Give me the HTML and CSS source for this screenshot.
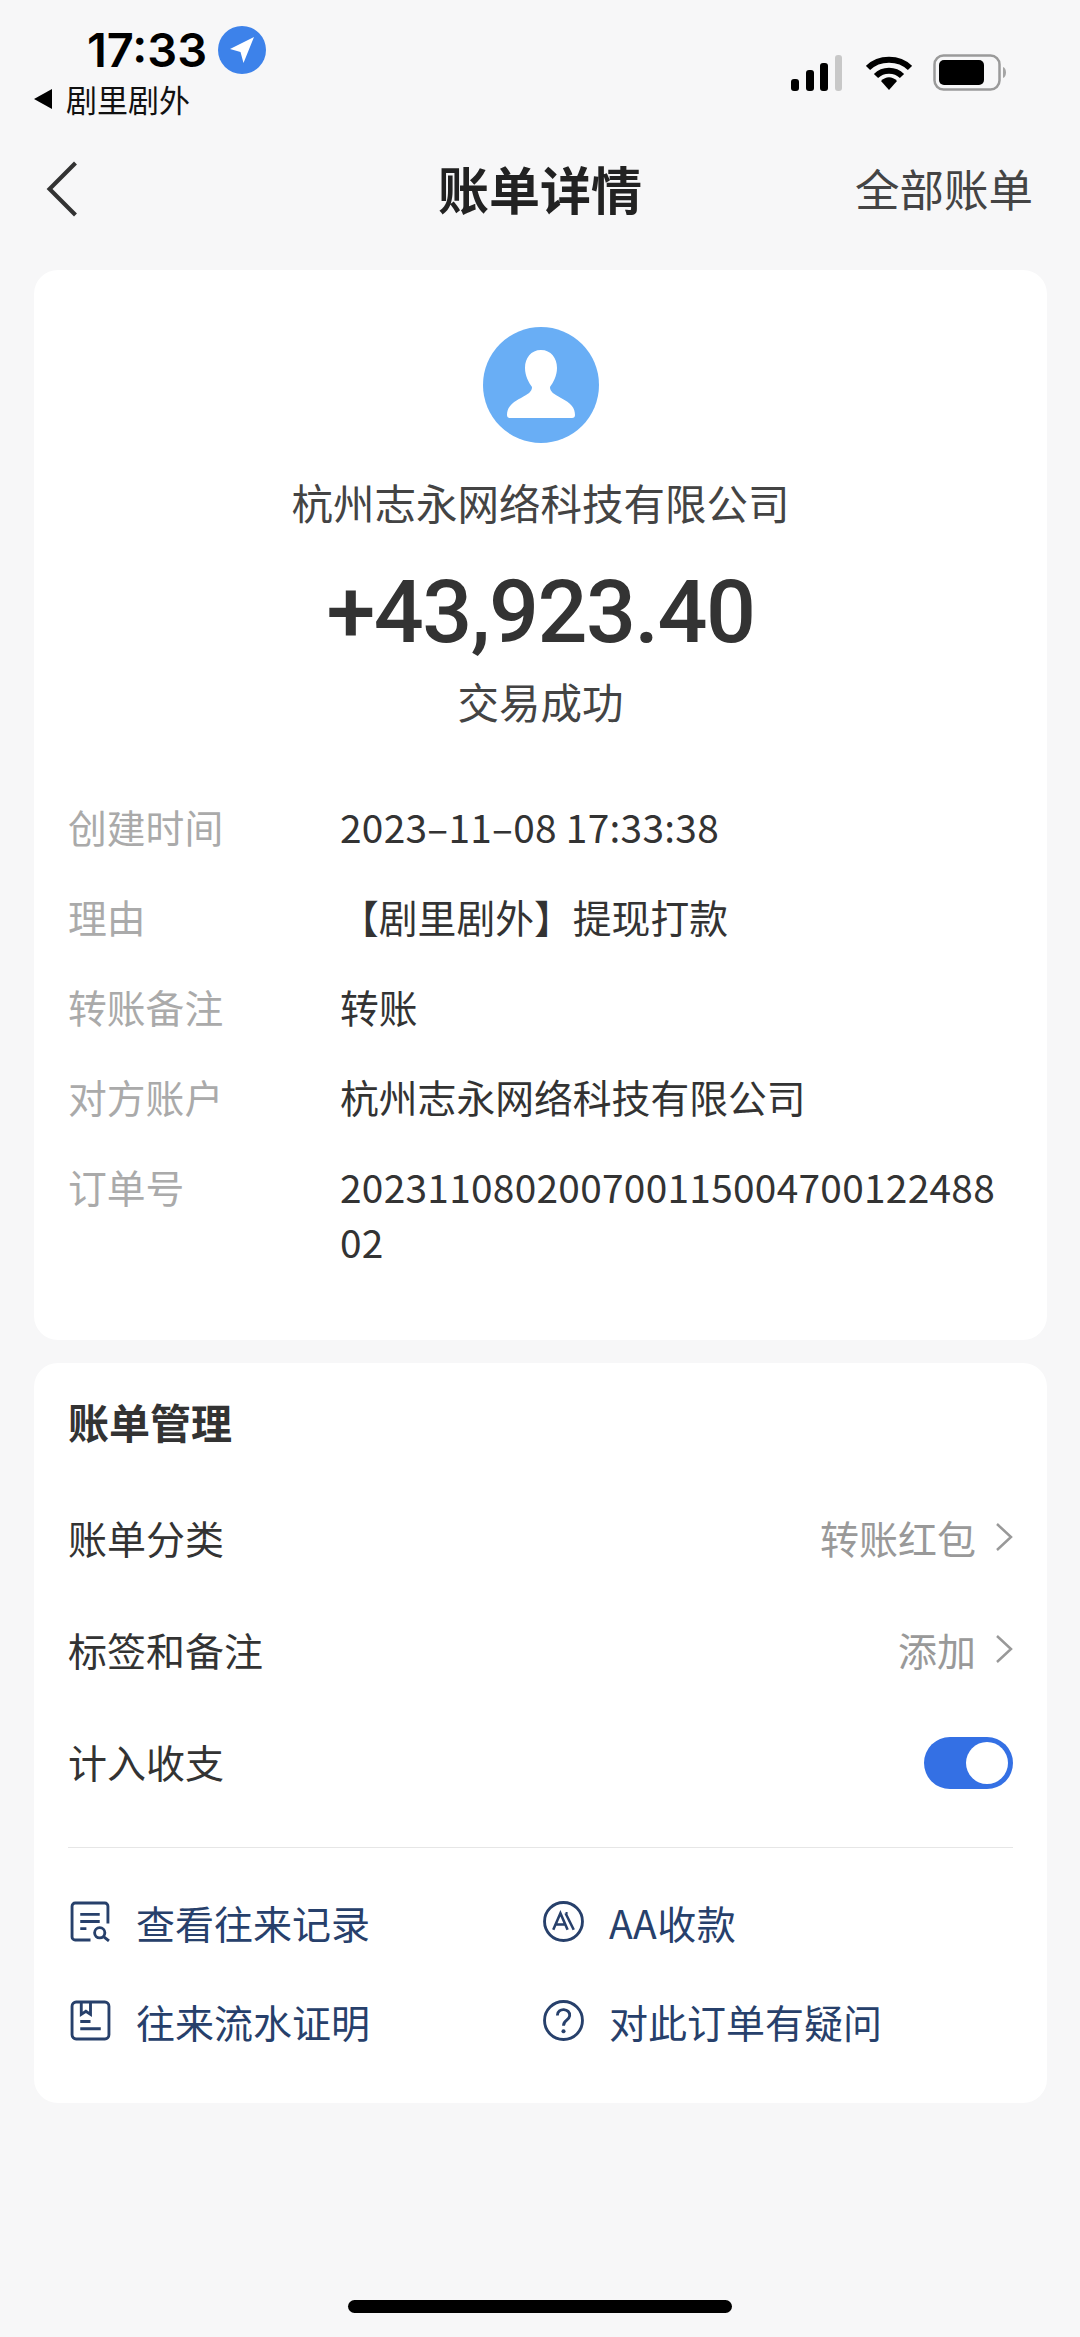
FILE: index.html
```html
<!DOCTYPE html>
<html lang="zh-CN">
<head>
<meta charset="utf-8">
<title>账单详情</title>
<link rel="stylesheet" href="styles.css">
</head>
<body>
<div class="page">
  <header class="status">
    <div class="status-left">
      <div class="clock-row">
        <span class="clock">17:33</span>
        <svg class="loc" viewBox="0 0 48 48"><circle cx="24" cy="24" r="24" fill="#3d82ea"/><path d="M36 11 L12 23 L22.500 26 L25.500 37 Z" fill="#fff"/></svg>
      </div>
      <div class="back-app"><span class="tri"></span><span>剧里剧外</span></div>
    </div>
    <div class="status-right">
      <svg class="signal" viewBox="0 0 54 36"><rect x="0" y="24" width="8" height="12" rx="3" fill="#000"/><rect x="15" y="15" width="8" height="21" rx="3" fill="#000"/><rect x="29" y="8" width="8" height="28" rx="3" fill="#000"/><rect x="44" y="0" width="7" height="36" rx="3" fill="#c8c8c8"/></svg>
      <svg class="wifi" viewBox="0 0 46 34"><path d="M2 12 C13 1 33 1 44 12" fill="none" stroke="#000" stroke-width="6"/><path d="M10 20 C17 13 29 13 36 20" fill="none" stroke="#000" stroke-width="6"/><path d="M15 25 C20 20 26 20 31 25 L23 34 Z" fill="#000"/></svg>
      <svg class="battery" viewBox="0 0 74 38"><rect x="1.500" y="1.500" width="65" height="34" rx="9" fill="none" stroke="#9a9a9a" stroke-width="2.500"/><rect x="6" y="6" width="45" height="25" rx="5" fill="#000"/><path d="M70 13 C74 14 74 23 70 24 Z" fill="#a5a5a5"/></svg>
    </div>
  </header>

  <nav class="nav">
    <svg class="nav-back" viewBox="0 0 32 54"><path d="M29 2 L4 27 L29 52" fill="none" stroke="#333" stroke-width="4"/></svg>
    <h1 class="nav-title">账单详情</h1>
    <span class="nav-action">全部账单</span>
  </nav>

  <section class="card card-main">
    <svg class="avatar" viewBox="0 0 116 116"><circle cx="58" cy="58" r="58" fill="#69aef5"/><path d="M58 23 C68 23 74 31 74 41 C74 49 70 56 67 60 C67 65 71 67 78 71 C88 76 92 81 92 88 C92 90 91 91 89 91 L27 91 C25 91 24 90 24 88 C24 81 28 76 38 71 C45 67 49 65 49 60 C46 56 42 49 42 41 C42 31 48 23 58 23 Z" fill="#fff"/></svg>
    <div class="payee">杭州志永网络科技有限公司</div>
    <div class="amount">+43,923.40</div>
    <div class="state">交易成功</div>
    <dl class="details">
      <div class="row"><dt>创建时间</dt><dd class="date">2023–11–08 17:33:38</dd></div>
      <div class="row"><dt>理由</dt><dd>【剧里剧外】提现打款</dd></div>
      <div class="row"><dt>转账备注</dt><dd>转账</dd></div>
      <div class="row"><dt>对方账户</dt><dd>杭州志永网络科技有限公司</dd></div>
      <div class="row"><dt>订单号</dt><dd class="long">20231108020070011500470012248802</dd></div>
    </dl>
  </section>

  <section class="card card-manage">
    <h2 class="manage-title">账单管理</h2>
    <div class="mrow"><span>账单分类</span><span class="mval">转账红包<svg class="chev" viewBox="0 0 18 30"><path d="M2 2 L16 15 L2 28" fill="none" stroke="#999" stroke-width="2.500"/></svg></span></div>
    <div class="mrow"><span>标签和备注</span><span class="mval">添加<svg class="chev" viewBox="0 0 18 30"><path d="M2 2 L16 15 L2 28" fill="none" stroke="#999" stroke-width="2.500"/></svg></span></div>
    <div class="mrow"><span>计入收支</span><span class="toggle"><span class="knob"></span></span></div>
    <hr class="rule">
    <div class="links">
      <a class="link"><svg class="ico" viewBox="0 0 40 40"><path d="M20 38 H5 a3 3 0 0 1-3-3 V5 a3 3 0 0 1 3-3 H34 a3 3 0 0 1 3 3 V22" fill="none" stroke="#27406b" stroke-width="2.800"/><path d="M10 13 H29 M10 20 H29 M10 27 H16" stroke="#27406b" stroke-width="2.800"/><circle cx="29" cy="31" r="5" fill="none" stroke="#27406b" stroke-width="2.800"/><path d="M33 35 L38 39" stroke="#27406b" stroke-width="2.800"/></svg><span>查看往来记录</span></a>
      <a class="link"><svg class="ico" viewBox="0 0 40 40"><circle cx="20" cy="20" r="18.500" fill="none" stroke="#27406b" stroke-width="2.800"/><path d="M10 28 L17 12 L24 28 M13 23 H21 M22 12 L30 28 M24 12 H22" fill="none" stroke="#27406b" stroke-width="2.500"/></svg><span class="aa">AA收款</span></a>
      <a class="link"><svg class="ico" viewBox="0 0 40 40"><rect x="2" y="2" width="36" height="36" rx="4" fill="none" stroke="#27406b" stroke-width="2.800"/><path d="M11 3 V14 L15.500 11 L20 14 V3 M10 21 H20 M10 28 H30" fill="none" stroke="#27406b" stroke-width="2.800"/></svg><span>往来流水证明</span></a>
      <a class="link"><svg class="ico" viewBox="0 0 40 40"><circle cx="20" cy="20" r="18.500" fill="none" stroke="#27406b" stroke-width="2.800"/><path d="M14 15 C14 7 27 8 26 15.500 C25.500 20 20 19.500 20 25" fill="none" stroke="#27406b" stroke-width="2.800"/><circle cx="20" cy="30.500" r="2" fill="#27406b"/></svg><span>对此订单有疑问</span></a>
    </div>
  </section>

  <div class="home-bar"></div>
</div>
</body>
</html>
```

FILE: styles.css
```css
* { box-sizing: border-box; }
html, body { margin: 0; padding: 0; }
body {
  width: 1080px;
  height: 2337px;
  background: #f7f7f8;
  font-family: "Noto Sans CJK SC", "Noto Sans", sans-serif;
  color: #333;
  overflow: hidden;
}
.page { display: flex; flex-direction: column; height: 2337px; padding: 0 34px; }

.status { display: flex; justify-content: space-between; align-items: flex-start; height: 153px; padding-top: 24px; margin: 0 -34px; }
.status-left { display: flex; flex-direction: column; padding-left: 34px; }
.clock-row { display: flex; align-items: center; gap: 11px; padding-left: 53px; height: 52px; }
.clock { font-family: Inter, sans-serif; font-size: 47px; font-weight: 600; color: #000; line-height: 52px; }
.loc { width: 48px; height: 48px; }
.back-app { display: flex; align-items: center; gap: 14px; font-size: 31px; line-height: 40px; color: #111; height: 46px; }
.tri { width: 0; height: 0; border-style: solid; border-width: 10px 18px 10px 0; border-color: transparent #000 transparent transparent; }
.status-right { display: flex; align-items: center; gap: 21px; padding: 30px 73px 0 0; }
.signal { width: 54px; height: 36px; }
.wifi { width: 46px; height: 34px; }
.battery { width: 74px; height: 38px; }

.nav { position: relative; display: flex; align-items: center; justify-content: space-between; height: 70px; padding-left: 11px; padding-right: 13px; }
.nav-back { width: 34px; height: 56px; margin-top: 2px; }
.nav-title { position: absolute; left: 0; right: 0; margin: 0; text-align: center; font-size: 51px; font-weight: 700; color: #222; line-height: 70px; }
.nav-action { font-size: 44.500px; color: #444; line-height: 70px; }

.card { background: #fff; border-radius: 24px; width: 1013px; }
.card-main { display: flex; flex-direction: column; align-items: center; margin-top: 47px; height: 1070px; padding-top: 57px; }
.avatar { width: 116px; height: 116px; display: block; }
.payee { font-size: 41.500px; line-height: 54px; margin-top: 32px; color: #444; }
.amount { font-family: Roboto, sans-serif; font-weight: 500; font-size: 88px; line-height: 108px; margin-top: 29px; letter-spacing: -1.500px; color: #333; }
.state { font-size: 41.500px; line-height: 54px; margin-top: 8px; color: #444; }
.details { align-self: stretch; margin: 71px 0 0; padding: 0 34px; display: flex; flex-direction: column; gap: 36px; }
.row { display: flex; font-size: 38.800px; line-height: 54px; }
.row dt { width: 272px; color: #aaa; flex: none; }
.row dd { margin: 0; color: #333; }
.row dd.date { letter-spacing: .3px; }
.row dd.long { width: 664px; word-break: break-all; line-height: 55px; letter-spacing: .3px; }

.card-manage { margin-top: 23px; height: 740px; padding: 31px 34px 0; }
.manage-title { margin: 0; font-size: 41px; font-weight: 700; line-height: 54px; color: #333; }
.mrow { display: flex; justify-content: space-between; align-items: center; height: 112px; font-size: 39px; color: #333; }
.manage-title + .mrow { margin-top: 33px; }
.mval { display: flex; align-items: center; color: #999; gap: 19px; }
.chev { width: 18px; height: 30px; }
.toggle { display: flex; justify-content: flex-end; align-items: center; width: 89px; height: 52px; margin-top: 4px; padding-right: 5px; border-radius: 26px; background: #3470e4; }
.knob { width: 42px; height: 42px; border-radius: 50%; background: #fff; }
.rule { border: 0; border-top: 1px solid #e6e6e6; margin: 30px 0 0; }
.links { display: grid; grid-template-columns: 473px 1fr; grid-template-rows: 99px 99px; margin-top: 24px; }
.link { display: flex; align-items: center; gap: 25px; font-size: 39px; color: #27406b; }
.ico { width: 41px; height: 41px; margin-left: 2px; flex: none; }
.aa { letter-spacing: .5px; }

.home-bar { flex: none; margin: auto auto 24px; width: 384px; height: 13px; border-radius: 7px; background: #000; }
```
